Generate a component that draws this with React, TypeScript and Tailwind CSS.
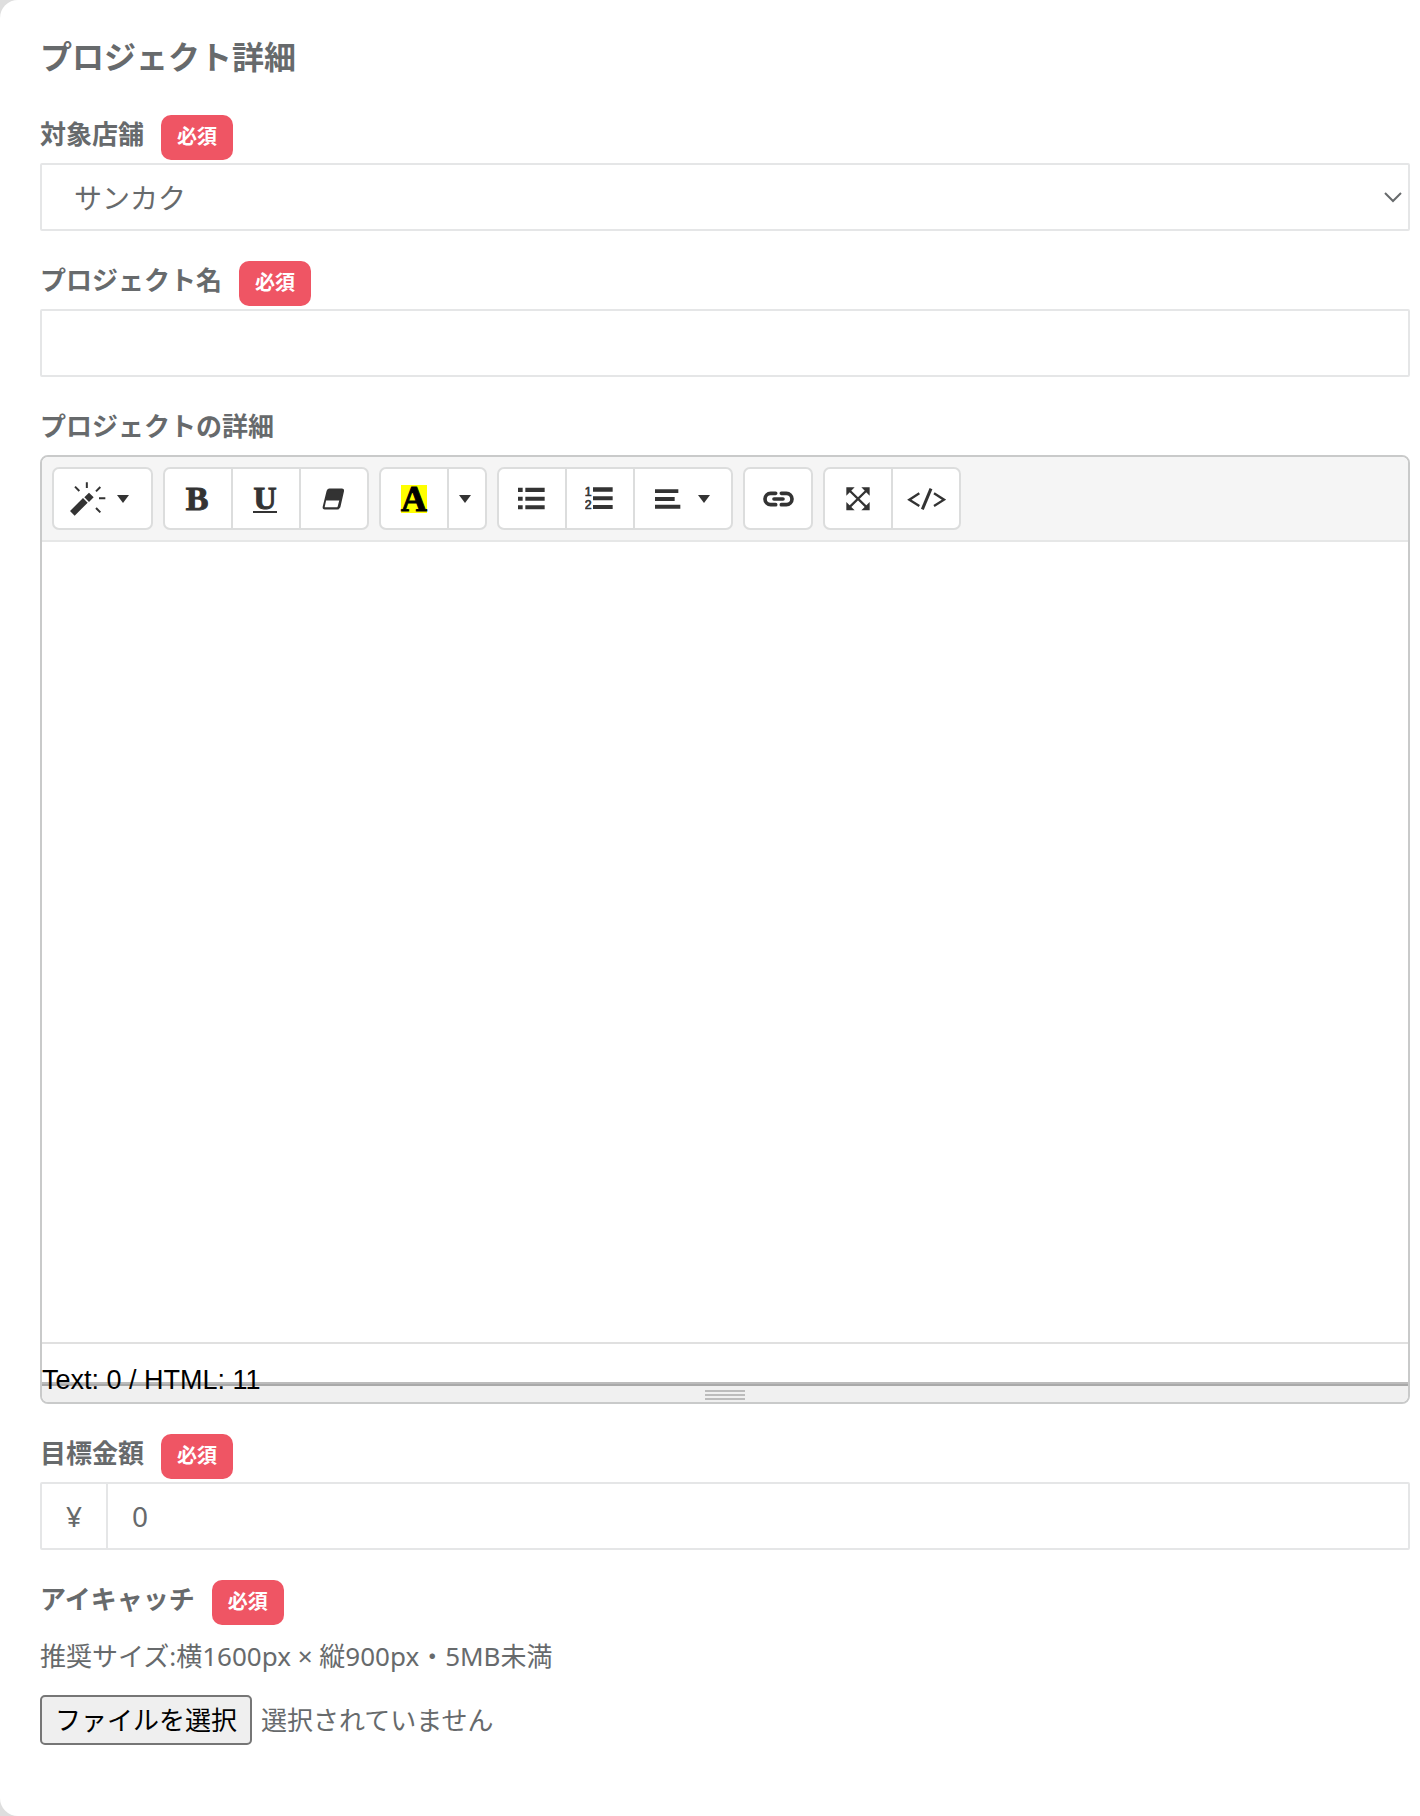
import React, { useState } from "react";

function RequiredBadge() {
  return (
    <span className="flex h-[45px] items-center rounded-[10px] bg-[#ef5564] px-4 pb-[2px] text-[20px] font-bold text-white">
      必須
    </span>
  );
}

function FieldLabel({ htmlFor, text, required }: { htmlFor: string; text: string; required?: boolean }) {
  return (
    <label htmlFor={htmlFor} className="flex h-12 w-fit items-start gap-[17px] text-[26px] leading-[38px] font-bold">
      <span>{text}</span>
      {required && <RequiredBadge />}
    </label>
  );
}

function Glyph({ box, w, h, children }: { box: string; w: number; h: number; children: React.ReactNode }) {
  return (
    <svg viewBox={box} width={w} height={h} fill="#333" stroke="none" className="shrink-0" aria-hidden="true">
      {children}
    </svg>
  );
}

function Caret() {
  return (
    <Glyph box="0 0 36 24" w={12} h={8}>
      <path d="M0 0H36L18 24Z" />
    </Glyph>
  );
}

function ToolButton({ label, className = "w-[70px] pr-[2px]", children }: { label: string; className?: string; children: React.ReactNode }) {
  return (
    <button
      type="button"
      aria-label={label}
      className={`${className} -ml-[2px] flex h-[63px] items-center justify-center border-2 border-[#dcdddd] bg-white text-[#333] first:ml-0 first:rounded-l-[7px] last:rounded-r-[7px]`}
    >
      {children}
    </button>
  );
}

function ToolGroup({ children }: { children: React.ReactNode }) {
  return <div className="flex">{children}</div>;
}

function WandIcon() {
  return (
    <Glyph box="120 123 108 102" w={36} h={34}>
      <path d="M120 210L159 171L173 185L134 224ZM163 169L177 155L191 169L177 183Z" />
      <path
        d="M170.500 124V141M135 137L148 150M211 138L198 151M207 172H226M198 201L211 214"
        stroke="#333"
        strokeWidth="6"
      />
    </Glyph>
  );
}

function EraserIcon() {
  return (
    <Glyph box="877 145 69 67" w={23} h={22}>
      <path
        d="M899 149H937Q942 149 941 154L930 203Q928 208 923 208H885Q880 208 881 203L893 154Q895 149 899 149Z"
        stroke="#333"
        strokeWidth="5"
      />
      <path d="M889 183H929L924 202Q923 204 921 204H886Q884 204 885 201Z" fill="#fff" />
    </Glyph>
  );
}

function BulletListIcon() {
  return (
    <Glyph box="445 142 81 69" w={27} h={23}>
      <path d="M445 144h14v13h-14zM445 171h14v12h-14zM445 197h14v12h-14zM467 144h58v13h-58zM467 171h58v12h-58zM467 197h58v12h-58z" />
    </Glyph>
  );
}

function NumberListIcon() {
  return (
    <Glyph box="648 140 84 75" w={28} h={25}>
      <path d="M672 144h59v13h-59zM672 171h59v12h-59zM672 197h59v12h-59z" />
      <text x="647" y="170" fontSize="37" fontFamily="Liberation Sans, sans-serif" stroke="#333" strokeWidth="2">
        1
      </text>
      <text x="647" y="210" fontSize="37" fontFamily="Liberation Sans, sans-serif" stroke="#333" strokeWidth="2">
        2
      </text>
    </Glyph>
  );
}

function AlignIcon() {
  return (
    <Glyph box="855 147 78 60" w={26} h={20}>
      <path d="M855 148h70v11h-70zM855 171h59v12h-59zM855 194h76v12h-76z" />
    </Glyph>
  );
}

function LinkIcon() {
  return (
    <Glyph box="98 153 93 48" w={31} h={16}>
      <path
        d="M136 160H121A17 17 0 0 0 121 194H136M153 160H168A17 17 0 0 1 168 194H153M131 177H158"
        fill="none"
        stroke="#333"
        strokeWidth="11"
        strokeLinecap="round"
      />
    </Glyph>
  );
}

function ExpandIcon() {
  return (
    <Glyph box="349 142 72 72" w={24} h={24}>
      <path d="M350 143H375L350 168ZM420 143V168L395 143ZM350 212V187L375 212ZM420 212H395L420 187Z" />
      <path d="M358 151L412 204M412 151L358 204" stroke="#333" strokeWidth="7" />
    </Glyph>
  );
}

function CodeIcon() {
  return (
    <Glyph box="530 145 117 66" w={39} h={22}>
      <path d="M567 161L537 180L567 199M611 161L641 180L611 199" fill="none" stroke="#333" strokeWidth="7" />
      <path d="M602 147L576 209" stroke="#333" strokeWidth="9" />
    </Glyph>
  );
}

function Toolbar() {
  return (
    <div className="flex flex-wrap gap-[10px] rounded-t-md border-b-2 border-[#e6e7e7] bg-[#f5f5f5] p-[10px]">
      <ToolGroup>
        <ToolButton label="スタイル" className="w-[101px] gap-[11px] pr-[6px]">
          <WandIcon />
          <Caret />
        </ToolButton>
      </ToolGroup>
      <ToolGroup>
        <ToolButton label="太字">
          <span className="font-['Liberation_Serif',serif] text-[34px] leading-none font-bold [-webkit-text-stroke:1px]">
            B
          </span>
        </ToolButton>
        <ToolButton label="下線">
          <span className="border-b-2 border-[#333] font-['Liberation_Serif',serif] text-[32px] leading-[26px] font-bold [-webkit-text-stroke:1px]">
            U
          </span>
        </ToolButton>
        <ToolButton label="書式をクリア">
          <EraserIcon />
        </ToolButton>
      </ToolGroup>
      <ToolGroup>
        <ToolButton label="文字色" className="w-[70px]">
          <span className="bg-[#ff0] font-['Liberation_Serif',serif] text-[36px] leading-7 font-bold text-black [-webkit-text-stroke:1px]">
            A
          </span>
        </ToolButton>
        <ToolButton label="その他の色" className="w-10 pr-1">
          <Caret />
        </ToolButton>
      </ToolGroup>
      <ToolGroup>
        <ToolButton label="箇条書き">
          <BulletListIcon />
        </ToolButton>
        <ToolButton label="番号付きリスト">
          <NumberListIcon />
        </ToolButton>
        <ToolButton label="段落" className="w-[100px] gap-[17px] pr-[2px]">
          <AlignIcon />
          <Caret />
        </ToolButton>
      </ToolGroup>
      <ToolGroup>
        <ToolButton label="リンク" className="w-[70px]">
          <LinkIcon />
        </ToolButton>
      </ToolGroup>
      <ToolGroup>
        <ToolButton label="フルスクリーン" className="w-[70px]">
          <ExpandIcon />
        </ToolButton>
        <ToolButton label="コード表示" className="w-[70px]">
          <CodeIcon />
        </ToolButton>
      </ToolGroup>
    </div>
  );
}

function Editor() {
  return (
    <div className="rounded-lg border-2 border-[#c9caca]">
      <Toolbar />
      <textarea id="detail" className="block h-[800px] w-full resize-none p-5 text-[26px] outline-none" />
      <div className="relative h-10 border-t-2 border-[#e0e0e0]">
        <span className="absolute top-4 left-0 z-10 font-['Liberation_Sans',sans-serif] text-[27px] leading-10 whitespace-nowrap text-black">
          Text: 0 / HTML: 11
        </span>
      </div>
      <div className="border-t-2 border-[#bcbcbc]">
        <div className="flex h-[18px] flex-col items-center gap-[2px] rounded-b-md border-t-2 border-[#a9a9a9] bg-[#f0f0f0] pt-1">
          <i className="h-[2px] w-10 bg-[#bcbcbc]" />
          <i className="h-[2px] w-10 bg-[#bcbcbc]" />
          <i className="h-[2px] w-10 bg-[#bcbcbc]" />
        </div>
      </div>
    </div>
  );
}

export default function App() {
  const [name, setName] = useState("");
  const [amount, setAmount] = useState("0");
  return (
    <div className="min-h-screen bg-[#dedede]">
      <form
        lang="ja"
        className="flex min-h-screen flex-col rounded-l-[18px] bg-white pt-[33px] pr-[10px] pb-16 pl-10 font-['Noto_Sans','Noto_Sans_CJK_JP',sans-serif] text-[#676a6c]"
      >
        <h2 className="mb-[34px] text-[32px] leading-[48px] font-bold">プロジェクト詳細</h2>
        <div className="flex flex-col gap-[30px]">
          <div>
            <FieldLabel htmlFor="shop" text="対象店舗" required />
            <div className="relative">
              <select
                id="shop"
                className="block h-[68px] w-full appearance-none rounded-[2px] border-2 border-[#e5e6e7] bg-white px-8 pt-[2px] text-[28px] outline-none"
              >
                <option>サンカク</option>
              </select>
              <svg
                viewBox="0 0 18 11"
                width="18"
                height="11"
                className="pointer-events-none absolute top-[29px] right-2"
                fill="none"
                stroke="#676a6c"
                strokeWidth="2"
                aria-hidden="true"
              >
                <path d="M1 1L9 9L17 1" />
              </svg>
            </div>
          </div>
          <div>
            <FieldLabel htmlFor="name" text="プロジェクト名" required />
            <input
              id="name"
              type="text"
              value={name}
              onChange={(e) => setName(e.target.value)}
              className="block h-[68px] w-full rounded-[2px] border-2 border-[#e5e6e7] px-6 text-[28px] outline-none"
            />
          </div>
          <div>
            <FieldLabel htmlFor="detail" text="プロジェクトの詳細" />
            <Editor />
          </div>
          <div>
            <FieldLabel htmlFor="amount" text="目標金額" required />
            <div className="flex h-[68px] rounded-[2px] border-2 border-[#e5e6e7]">
              <span className="flex w-[66px] items-center justify-center border-r-2 border-[#e5e6e7] text-[28px]">¥</span>
              <input
                id="amount"
                type="text"
                value={amount}
                onChange={(e) => setAmount(e.target.value)}
                className="min-w-0 flex-1 px-6 text-[28px] outline-none"
              />
            </div>
          </div>
          <div>
            <FieldLabel htmlFor="eyecatch" text="アイキャッチ" required />
            <p className="pt-2 pb-[19px] text-[26px] leading-10">推奨サイズ:横1600px × 縦900px・5MB未満</p>
            <div className="relative flex items-center gap-[9px] text-[26px]">
              <input id="eyecatch" type="file" className="sr-only" />
              <label
                htmlFor="eyecatch"
                className="flex h-[50px] items-center rounded-[5px] border-2 border-[#767676] bg-[#efefef] px-[13px] text-black"
              >
                ファイルを選択
              </label>
              <span>選択されていません</span>
            </div>
          </div>
        </div>
      </form>
    </div>
  );
}
